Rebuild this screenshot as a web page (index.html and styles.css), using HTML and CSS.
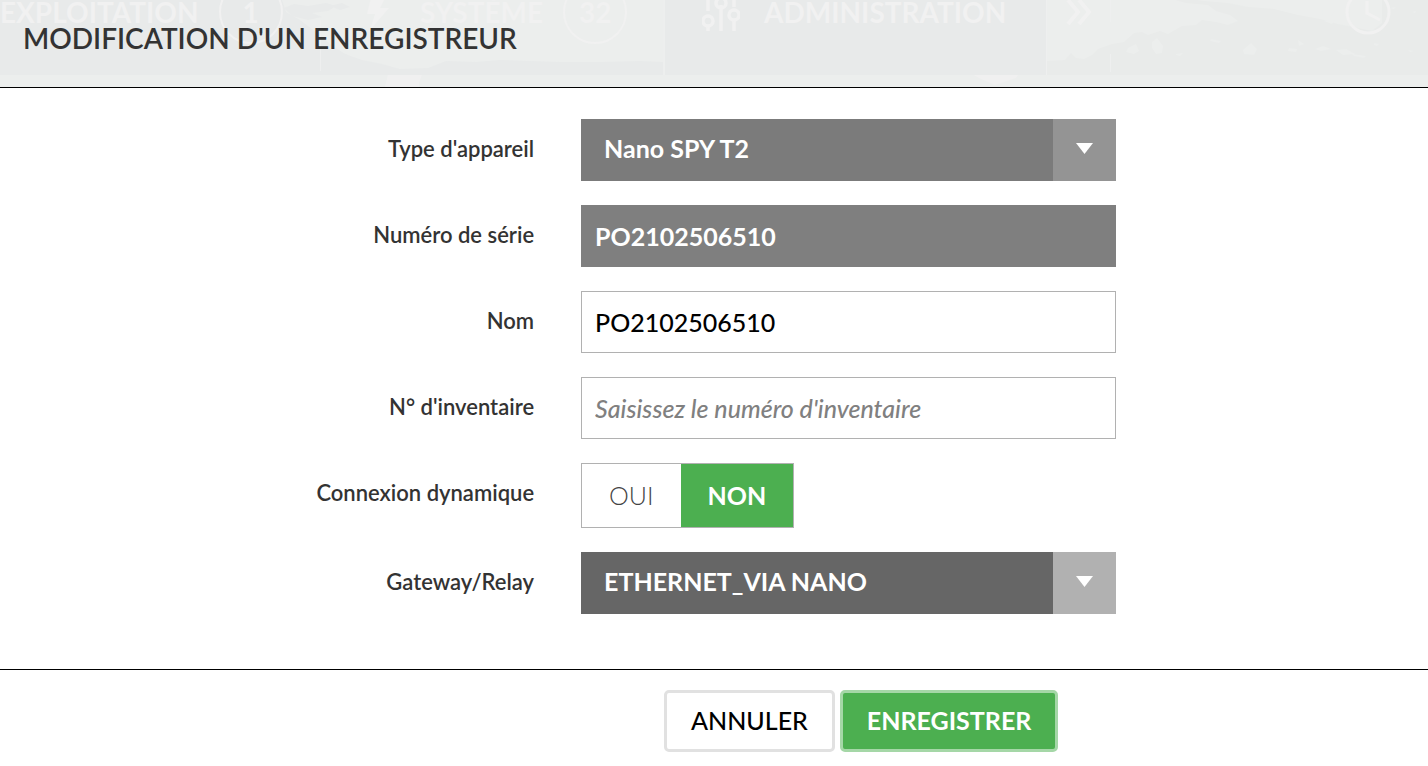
FILE: index.html
```
<!DOCTYPE html>
<html lang="fr">
<head>
    <meta charset="UTF-8">
    <meta name="viewport" content="width=device-width, initial-scale=1.0">
    <title>Modification d'un enregistreur</title>
    <link rel="stylesheet" href="styles.css">
</head>
<body>
    <header class="header">
        <!-- faded main menu behind the title -->
        <div class="backdrop">
            <svg class="texture" viewBox="0 0 1428 87" preserveAspectRatio="none" aria-hidden="true">
                <rect width="1428" height="87" fill="#eceeed"/>
                <path fill="#e8eaea" d="M0 0H282L286 12 300 20 316 32 330 44 345 54 362 60 382 64 400 69 428 68 446 61 476 62 500 60 530 61 560 62 600 62 640 61 663 62V75H0Z"/>
                <path fill="#e8eaea" d="M284 8l10-4 14 2 18-3 10 3-8 5-16 2 10 4-14 3-16-4zM300 34l16-2 6 3-8 3zM322 46l12 3 14 6-6 2-16-6zM330 6l12-3 8 4-10 3z"/>
                <path fill="#e8eaea" d="M665 0H1046V75H665Z"/>
                <path fill="#e9ebea" d="M1047 61l18-1 6-7 5 5 8 1 8-4 6-6 14-5 12-2 10-9 8-1 6 3 12-4 8 3 14-8 14-1 6-5 14 2 12 3 10-4-8-6-14-4-8-6-22-2-14-4 10-1 22 3 24 2 20 4 26 2 24 6 22 4 18 5 20 4 14 3 10-8V0h72v75H1047Z"/>
                <path fill="#eceeed" d="M1128 48l8-4 3 7-5 3-8-2zM1152 42l5-4 6 8-1 7-6 1-4-6zM1211 39l10 2-2 2-9-2zM1243 50l8-7 6 6-3 6-10-1zM1289 48l8 1-1 3-8-1zM1298 40l6 4-5 2zM1315 49l8-3 8 3-10 2zM1336 50l10-1 9 5-12 1zM1352 54l14 2-2 2-10-2zM1374 43l5 1-2 2-3-1zM1390 8l6-1-2 2zM1412 12l4-1-1 2zM1408 50l6 1-4 1zM1322 10l7-3 6 4-4 5-8-1zM1324 21l12-2-4 5zM1176 54l7-1-3 3-4-1z"/>
                <path fill="#eceeed" d="M98 75H1428V87H103L98 81Z"/>
                <path fill="#f0f0f0" d="M388 75h34l-3 8v4h-34zM974 75h44l-2 3-6 2-15 5-16-7z"/>
                <path stroke="#eeefef" d="M320.500 20v51M664 0v75M1046.500 0v75M1110.500 0v22M1110.500 54v18"/>
            </svg>
            <nav class="menu">
                <a class="tab tab-first" href="#">EXPLOITATION <span class="count">1</span></a>
                <a class="tab" href="#">
                    <svg class="bolt" viewBox="0 0 24 48" aria-hidden="true"><path fill="#f1f1f1" d="M6 6L20 8 14 20H23L4 42 9 26H1Z"/></svg>
                    SYSTÈME <span class="count">32</span>
                </a>
                <a class="tab tab-admin" href="#">
                    <svg class="sliders" viewBox="0 0 38 50" aria-hidden="true" fill="none" stroke="#f1f1f1" stroke-width="3.500">
                        <path d="M6 4V24M6 38V44M19 4V7M19 18V44M32 4V20M32 32V44"/>
                        <circle cx="6" cy="34" r="5"/><circle cx="19" cy="16" r="5"/><circle cx="32" cy="28" r="5"/>
                    </svg>
                    ADMINISTRATION
                </a>
                <a class="tab tab-more" href="#" aria-label="Plus">
                    <svg class="chevrons" viewBox="0 0 26 26" aria-hidden="true" fill="none" stroke="#f1f1f1" stroke-width="4"><path d="M2 1L12 13 2 25M13 1L23 13 13 25"/></svg>
                </a>
                <a class="tab tab-clock" href="#" aria-label="Heure">
                    <svg class="clock" viewBox="0 0 46 46" aria-hidden="true" fill="none" stroke="#f1f1f1" stroke-width="3"><circle cx="23" cy="23" r="21"/><path d="M22 12V24L35 31"/></svg>
                </a>
            </nav>
        </div>
        <h1 class="title">MODIFICATION D'UN ENREGISTREUR</h1>
    </header>

    <form id="recorderForm">
        <div class="fields">
            <label class="name" for="type">Type d'appareil</label>
            <div class="select locked">
                <select id="type" disabled>
                    <option>Nano SPY T2</option>
                </select>
                <svg class="arrow" viewBox="0 0 17 11" aria-hidden="true"><path fill="#fff" d="M0 0H17L8.500 11Z"/></svg>
            </div>

            <label class="name" for="serial">Numéro de série</label>
            <input class="box serial" type="text" id="serial" value="PO2102506510" disabled>

            <label class="name" for="nom">Nom</label>
            <input class="box" type="text" id="nom" value="PO2102506510">

            <label class="name" for="inventory">N° d'inventaire</label>
            <input class="box" type="text" id="inventory" placeholder="Saisissez le numéro d'inventaire">

            <span class="name" id="dynamicLabel">Connexion dynamique</span>
            <div class="toggle" role="radiogroup" aria-labelledby="dynamicLabel">
                <input type="radio" name="dynamic" id="oui">
                <label for="oui">OUI</label>
                <input type="radio" name="dynamic" id="non" checked>
                <label for="non">NON</label>
            </div>

            <label class="name" for="gateway">Gateway/Relay</label>
            <div class="select">
                <select id="gateway">
                    <option>ETHERNET_VIA NANO</option>
                </select>
                <svg class="arrow" viewBox="0 0 17 11" aria-hidden="true"><path fill="#fff" d="M0 0H17L8.500 11Z"/></svg>
            </div>
        </div>

        <div class="actions">
            <button class="btn cancel" type="button">ANNULER</button>
            <button class="btn save" type="submit">ENREGISTRER</button>
        </div>
    </form>
</body>
</html>
```
FILE: styles.css
```
* {
    box-sizing: border-box;
}
body {
    margin: 0;
    font-family: Lato, sans-serif;
    font-size: 25px;
    font-weight: 500;
    color: #333;
    background-color: #fff;
}

/* header */
.header {
    position: relative;
    height: 88px;
    padding: 20px 23px;
    border-bottom: 1px solid #000;
    background-color: #eceeed;
}
.backdrop {
    position: absolute;
    top: 0;
    left: 0;
    right: 0;
    height: 87px;
    overflow: hidden;
}
.texture {
    position: absolute;
    width: 100%;
    height: 100%;
}
.menu {
    position: relative;
    display: flex;
    height: 24px;
}
.tab {
    display: flex;
    align-items: center;
    width: 342px;
    padding-left: 44px;
    font-size: 28px;
    font-weight: 700;
    line-height: 24px;
    color: #f1f1f1;
    text-decoration: none;
}
.tab-first {
    width: 322px;
    padding-left: 0;
}
.tab-admin {
    width: 380px;
    padding-left: 38px;
}
.tab-more {
    width: 66px;
    padding-left: 22px;
}
.tab-clock {
    flex: 1;
    justify-content: flex-end;
    padding-right: 37px;
}
.count {
    flex: none;
    width: 64px;
    height: 64px;
    margin-left: 20px;
    border: 2px solid #f1f1f1;
    border-radius: 50%;
    line-height: 60px;
    text-align: center;
}
.bolt {
    flex: none;
    width: 24px;
    height: 48px;
    margin-right: 30px;
}
.sliders {
    flex: none;
    width: 38px;
    height: 50px;
    margin-right: 24px;
}
.chevrons {
    width: 26px;
    height: 26px;
}
.clock {
    width: 46px;
    height: 46px;
}
.title {
    position: relative;
    margin: 0;
    font-size: 28px;
    font-weight: 600;
    line-height: 36px;
}

/* form */
.fields {
    display: grid;
    grid-template-columns: 37.4% 37.45%;
    column-gap: 47px;
    row-gap: 24px;
    padding: 31px 0 55px;
    border-bottom: 1px solid #000;
}
.name {
    padding-top: 14px;
    font-size: 22px;
    font-weight: 600;
    line-height: 32px;
    text-align: right;
}
.box {
    width: 100%;
    height: 62px;
    padding: 0 13px;
    border: 1px solid #b1b1b1;
    border-radius: 0;
    font: inherit;
    color: #000;
    background-color: #fff;
}
.box::placeholder {
    font-style: italic;
    color: #808080;
}
.serial {
    border-color: #7f7f7f;
    font-weight: 700;
    color: #fff;
    background-color: #7f7f7f;
}
.select {
    display: flex;
    position: relative;
    height: 62px;
    background: #666;
    border-right: 63px solid #b1b1b1;
}
.select select {
    flex: 1;
    appearance: none;
    padding: 0 23px 4px;
    border: none;
    font: inherit;
    font-weight: 700;
    color: #fff;
    background: none;
    opacity: 1;
}
.locked {
    background-color: #7b7b7b;
    border-color: #949494;
}
.arrow {
    position: absolute;
    top: 24px;
    right: -40px;
    width: 17px;
    height: 11px;
}
.toggle {
    display: flex;
    justify-self: start;
    height: 65px;
    border: 1px solid #b1b1b1;
}
.toggle input {
    position: absolute;
    opacity: 0;
}
.toggle label {
    padding: 0 27px;
    font-weight: 300;
    line-height: 62px;
    color: #444;
}
.toggle input:checked + label {
    font-weight: 700;
    color: #fff;
    background-color: #4caf50;
}

/* buttons */
.actions {
    display: flex;
    gap: 5px;
    padding: 20px 0 14px 46.5%;
}
.btn {
    height: 62px;
    padding: 0 24px 2px;
    border: 3px solid #e1e1e1;
    border-radius: 5px;
    font: inherit;
    color: #000;
    background-color: #fff;
    cursor: pointer;
}
.save {
    border-color: #a5d7a7;
    font-weight: 700;
    color: #fff;
    background-color: #4caf50;
}
```
